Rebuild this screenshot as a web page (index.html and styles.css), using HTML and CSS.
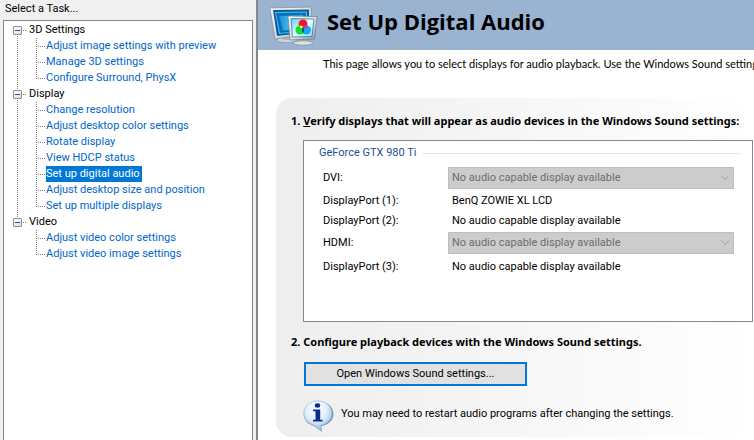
FILE: index.html
```html
<!DOCTYPE html>
<html lang="en">
<head>
<meta charset="utf-8">
<title>Set Up Digital Audio</title>
<link rel="stylesheet" href="styles.css">
</head>
<body>
<div class="app">
  <nav class="tasks" aria-labelledby="tasks-title">
    <div class="tasks-title" id="tasks-title">Select a Task...</div>
    <div class="tree-box">
      <ul class="tree">
        <li class="group">
          <div class="group-row"><button class="toggle" type="button" aria-label="Collapse 3D Settings"></button><span>3D Settings</span></div>
          <ul class="branch">
            <li><a href="#">Adjust image settings with preview</a></li>
            <li><a href="#">Manage 3D settings</a></li>
            <li><a href="#">Configure Surround, PhysX</a></li>
          </ul>
        </li>
        <li class="group">
          <div class="group-row"><button class="toggle" type="button" aria-label="Collapse Display"></button><span>Display</span></div>
          <ul class="branch">
            <li><a href="#">Change resolution</a></li>
            <li><a href="#">Adjust desktop color settings</a></li>
            <li><a href="#">Rotate display</a></li>
            <li><a href="#">View HDCP status</a></li>
            <li><a class="selected" href="#" aria-current="page">Set up digital audio</a></li>
            <li><a href="#">Adjust desktop size and position</a></li>
            <li><a href="#">Set up multiple displays</a></li>
          </ul>
        </li>
        <li class="group">
          <div class="group-row"><button class="toggle" type="button" aria-label="Collapse Video"></button><span>Video</span></div>
          <ul class="branch">
            <li><a href="#">Adjust video color settings</a></li>
            <li><a href="#">Adjust video image settings</a></li>
          </ul>
        </li>
      </ul>
    </div>
  </nav>

  <main class="page">
    <header class="banner">
      <svg class="banner-icon" width="48" height="42" viewBox="0 0 48 42" aria-hidden="true">
        <defs>
          <linearGradient id="frame" x1="0" y1="0" x2="1" y2="1">
            <stop offset="0" stop-color="#fdfdfd"/><stop offset=".6" stop-color="#d4d8dc"/><stop offset="1" stop-color="#8f979f"/>
          </linearGradient>
          <linearGradient id="screen" x1="0" y1="0" x2="1" y2="0">
            <stop offset="0" stop-color="#1c8fdc"/><stop offset="1" stop-color="#7ff2fb"/>
          </linearGradient>
          <linearGradient id="glass" x1="0" y1="0" x2="1" y2="1">
            <stop offset="0" stop-color="#5ccbee"/><stop offset=".5" stop-color="#eefcff"/><stop offset="1" stop-color="#8edcf2"/>
          </linearGradient>
        </defs>
        <ellipse cx="17" cy="36" rx="10" ry="2.500" fill="#cfd6dc" stroke="#8995a2" stroke-width=".6"/>
        <path d="M12 30h8l1 6H13z" fill="#aeb7c0"/>
        <path d="M0 4L41 3L42 30L5 35z" fill="url(#frame)" stroke="#78899a" stroke-width=".7"/>
        <path d="M3 6L39 5.500V28L7 32z" fill="#075b9d"/>
        <path d="M5 8L37 7.500V27L9 30z" fill="#48c5f2"/>
        <path d="M6 9L36 8.500V26L10 29z" fill="#0872b9"/>
        <path d="M9 12L33 11.500V25L13 26.500z" fill="url(#screen)"/>
        <path d="M29 34h7l2 5H28z" fill="#aab3bc"/>
        <ellipse cx="33" cy="39" rx="10" ry="2.200" fill="#dce1e5" stroke="#7d8995" stroke-width=".7"/>
        <path d="M18 12L47 12.500L44.500 35L20 36z" fill="url(#frame)" stroke="#697988" stroke-width=".7"/>
        <path d="M21 14.500L44 15L42 32.500L22.500 33z" fill="url(#glass)" stroke="#176ea5" stroke-width=".7"/>
        <circle cx="33" cy="20" r="4.500" fill="#f41427"/>
        <circle cx="30" cy="26" r="4.500" fill="#08e52d"/>
        <circle cx="36.500" cy="26" r="4.500" fill="#12aaf0"/>
        <path d="M29 22a5 5 0 0 1 4.500 1a5 5 0 0 1-1 1.500a5 5 0 0 1-3.500-2.500z" fill="#ffe43b"/>
        <path d="M37.500 22a5 5 0 0 0-4.500 1a5 5 0 0 0 .5 2a5 5 0 0 0 4-3z" fill="#dc20cf"/>
        <path d="M33 23a5 5 0 0 1 0 6a5 5 0 0 1 0-6z" fill="#164c75"/>
        <circle cx="34" cy="34" r=".8" fill="#31df1c"/>
      </svg>
      <h1>Set Up Digital Audio</h1>
    </header>
    <p class="intro">This page allows you to select displays for audio playback. Use the Windows Sound settings</p>

    <div class="panel">
      <h2>1. <u>V</u>erify displays that will appear as audio devices in the Windows Sound settings:</h2>
      <section class="outputs" aria-labelledby="gpu">
        <div class="legend"><span id="gpu">GeForce GTX 980 Ti</span></div>
        <div class="rows">
          <label for="dvi">DVI:</label>
          <div class="select-wrap">
            <select id="dvi" disabled><option>No audio capable display available</option></select>
            <svg class="chevron" width="10" height="6" viewBox="0 0 10 6" aria-hidden="true"><path d="M1 .5L5 4.500L9 .5"/></svg>
          </div>
          <span class="port">DisplayPort (1):</span><span class="value">BenQ ZOWIE XL LCD</span>
          <span class="port">DisplayPort (2):</span><span class="value">No audio capable display available</span>
          <label for="hdmi">HDMI:</label>
          <div class="select-wrap">
            <select id="hdmi" disabled><option>No audio capable display available</option></select>
            <svg class="chevron" width="10" height="6" viewBox="0 0 10 6" aria-hidden="true"><path d="M1 .5L5 4.500L9 .5"/></svg>
          </div>
          <span class="port">DisplayPort (3):</span><span class="value">No audio capable display available</span>
        </div>
      </section>
      <h2>2. Configure playback devices with the Windows Sound settings.</h2>
      <button class="open-sound" type="button">Open Windows Sound settings...</button>
      <div class="note">
        <svg width="31" height="33" viewBox="0 0 31 33" aria-hidden="true">
          <defs>
            <radialGradient id="bubble" cx=".45" cy=".3" r=".75">
              <stop offset="0" stop-color="#ffffff"/><stop offset=".5" stop-color="#e2effb"/><stop offset=".85" stop-color="#9fc3e6"/><stop offset="1" stop-color="#6d97c4"/>
            </radialGradient>
          </defs>
          <path d="M15 1C7 1 .8 6.500.8 14c0 6 4.200 10.500 10.200 12l8 6-.8-5.800C25 25 30.500 20.500 30.500 14C30.500 6.500 23.500 1 15 1z" fill="#4c6e96" opacity=".7"/>
          <path d="M14.700.8C7 .8.8 6.200.8 13.300c0 6 4.400 10.500 10.500 11.900l6.400 5.300-.2-5.200c6.500-1.200 11.300-6 11.300-12C28.800 6.200 22.500.8 14.700.8z" fill="url(#bubble)" stroke="#a4bdd6" stroke-width=".7"/>
          <ellipse cx="14.500" cy="5.500" rx="2.700" ry="2.200" fill="#0b2d91"/>
          <path d="M10 9.500h7.200v10.200h2.300v1.800h-9.500v-1.800h2.500v-8.400h-2.500z" fill="#0b2d91"/>
        </svg>
        <span>You may need to restart audio programs after changing the settings.</span>
      </div>
    </div>
  </main>
</div>
</body>
</html>
```
FILE: styles.css
```css
* { box-sizing: border-box; }

body {
  margin: 0;
  background: #fff;
  color: #000;
  font: 11px/16px Tahoma, Roboto, sans-serif;
}

ul { list-style: none; margin: 0; padding: 0; }

.app { display: flex; min-height: 100vh; overflow: hidden; }

.tasks {
  flex: 0 0 258px;
  display: flex;
  flex-direction: column;
  padding: 1px 3px 0;
  background: #f0f0f0;
  border-right: 2px solid #85878b;
}

.tasks-title { height: 19px; padding-left: 2px; }

.tree-box {
  flex: 1;
  padding: 1px 9px;
  background: #fff;
  border: 1px solid #828790;
  border-bottom: 0;
}

.group { position: relative; }

.group:not(:last-child)::before {
  content: "";
  position: absolute;
  top: 8px;
  bottom: -8px;
  left: 4px;
  width: 1px;
  background: repeating-linear-gradient(#808080 0 1px, transparent 1px 2px);
}

.group-row { display: flex; align-items: center; height: 16px; }

.group-row::before {
  content: "";
  order: 1;
  width: 3px;
  height: 1px;
  margin: 0 3px 0 1px;
  background: repeating-linear-gradient(90deg, #808080 0 1px, transparent 1px 2px);
}

.group-row span { order: 2; }

.toggle {
  position: relative;
  width: 9px;
  height: 9px;
  padding: 0;
  border: 1px solid #919191;
  border-radius: 1px;
  background: linear-gradient(135deg, #fff, #dcdcdc);
}

.toggle::after {
  content: "";
  position: absolute;
  top: 3px;
  left: 1px;
  width: 5px;
  height: 1px;
  background: #3453a5;
}

.branch { padding-left: 23px; }

.branch li {
  position: relative;
  display: flex;
  align-items: center;
  height: 16px;
}

.branch li::before {
  content: "";
  width: 10px;
  height: 1px;
  background: repeating-linear-gradient(90deg, #808080 0 1px, transparent 1px 2px);
}

.branch li::after {
  content: "";
  position: absolute;
  top: 0;
  left: 0;
  width: 1px;
  height: 16px;
  background: repeating-linear-gradient(#808080 0 1px, transparent 1px 2px);
}

.branch li:last-child::after { height: 8px; }

.branch a { color: #0066cc; text-decoration: none; white-space: nowrap; }

.branch .selected { padding-right: 2px; background: #0078d7; color: #fff; }

.page { flex: 1; min-width: 0; overflow: hidden; }

.banner {
  display: flex;
  align-items: center;
  gap: 9px;
  height: 50px;
  padding: 0 12px;
  background: #9ab3d1;
}

.banner h1 {
  margin: 0;
  padding-bottom: 9px;
  font: bold 22px/28px "Trebuchet MS", "Open Sans", sans-serif;
  white-space: nowrap;
}

.intro {
  margin: 0 0 26px 65px;
  padding-top: 6px;
  font-family: "Microsoft Sans Serif", Lato, sans-serif;
  white-space: nowrap;
}

.panel {
  margin-left: 18px;
  padding: 15px 1px 4px 15px;
  border-radius: 16px 0 0 16px;
  background: linear-gradient(90deg, #eee, #fff);
}

.panel h2 {
  margin: 0;
  font: bold 11px/16px Tahoma, "Noto Sans", sans-serif;
  white-space: nowrap;
}

.outputs {
  height: 182px;
  margin: 11px 0 12px 12px;
  padding: 4px 11px 0 15px;
  border: 1px solid #828790;
  background: #fff;
}

.legend { display: flex; align-items: center; gap: 6px; color: #1e4f99; }

.legend::after { content: ""; flex: 1; height: 1px; background: #e6e6e6; }

.rows {
  display: grid;
  grid-template-columns: 125px 1fr;
  grid-template-rows: 22px 24px 15px 30px 18px;
  align-items: center;
  padding: 6px 7px 0 4px;
}

.value { padding-left: 4px; }

.select-wrap { position: relative; height: 22px; }

.select-wrap select {
  appearance: none;
  display: block;
  width: 100%;
  height: 22px;
  padding: 0 20px 0 3px;
  border: 1px solid #bfbfbf;
  border-radius: 0;
  background: #ccc;
  color: #6d6d6d;
  font: inherit;
  opacity: 1;
}

.chevron {
  position: absolute;
  top: 8px;
  right: 4px;
  fill: none;
  stroke: #a0a0a0;
}

.open-sound {
  display: block;
  width: 223px;
  height: 24px;
  margin: 12px 0 14px 13px;
  padding: 0;
  border: 2px solid #0078d7;
  background: #e1e1e1;
  color: #000;
  font: inherit;
}

.note { display: flex; gap: 7px; padding-left: 12px; white-space: nowrap; }

.note span { padding-top: 6px; }
```
